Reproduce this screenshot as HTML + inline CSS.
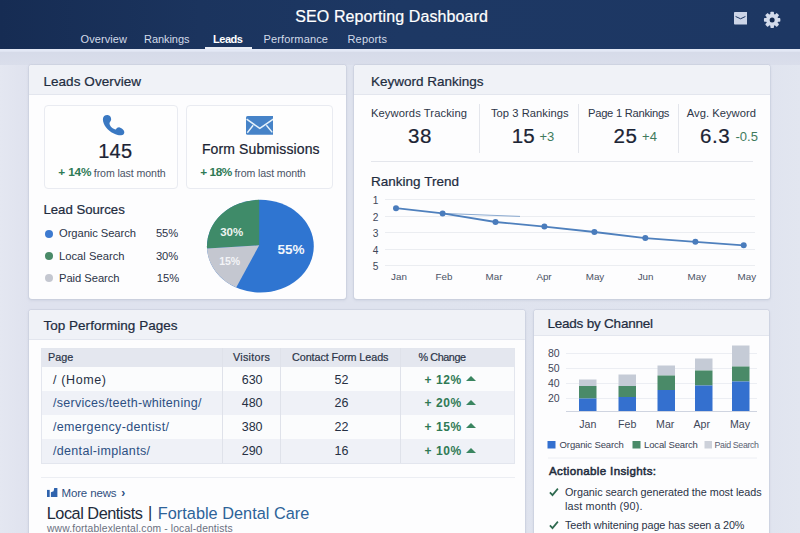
<!DOCTYPE html>
<html lang="en">
<head>
<meta charset="utf-8">
<title>SEO Reporting Dashboard</title>
<style>
*{box-sizing:border-box;margin:0;padding:0}
html,body{width:800px;height:533px;overflow:hidden}
body{font-family:"Liberation Sans",sans-serif;color:#1f2a3d;position:relative;
 background:linear-gradient(90deg,#e4e7f1 0px,#dfe2ee 30px,#dfe3ee 400px,#e0e4ef 770px,#e2e6f0 800px)}
.abs{position:absolute}
.t{position:absolute;white-space:nowrap;line-height:1;transform:translateY(-50%)}
.m{-webkit-text-stroke:0.22px currentColor}
#hdr{left:0;top:0;width:800px;height:48.8px;background:linear-gradient(90deg,#162c53 0,#1b345e 200px,#1d3864 400px,#1d3763 800px)}
#hdrglow{left:0;top:48.8px;width:800px;height:16.2px;background:linear-gradient(180deg,#e3e8f5 0,#e3e8f5 2px,#d6dbe9 3.5px,#dadeeb 16.2px)}
.card{position:absolute;background:#fdfdfe;border-radius:3px;box-shadow:0 0 0 1px rgba(200,205,220,.55),0 1px 3px rgba(120,130,160,.25);overflow:hidden}
.card .hd{position:absolute;left:0;top:0;right:0;height:30px;background:#f0f2f7;border-bottom:1px solid #e3e6ee}
.box{position:absolute;border:1px solid #e9ebf1;border-radius:4px;background:#fefefe}
.g{color:#2f7a55;font-weight:bold}
.dot{position:absolute;width:8.5px;height:8.5px;border-radius:50%}
.vl{position:absolute;width:1px;background:#e4e6ec}
.row{position:absolute;left:41px;width:474px;height:24px}
.tri{position:absolute;width:0;height:0;border-left:5.4px solid transparent;border-right:5.4px solid transparent;border-bottom:5.8px solid #3a8560}
</style>
</head>
<body>
<div id="hdr" class="abs"></div>
<div id="hdrglow" class="abs"></div>
<div class="abs" style="left:205px;top:47px;width:47px;height:2px;background:#e9edf5"></div>
<svg class="abs" style="left:733.8px;top:12.2px" width="13.4" height="12.6" viewBox="0 0 13.4 12.6"><rect width="13.4" height="12.6" rx="0.8" fill="#ccd5e8"/><path d="M1.6 4.5 L6.6 6.8 L11.4 4.5" stroke="#1c3560" stroke-width="1" fill="none"/></svg>
<svg class="abs" style="left:763px;top:11px" width="18" height="18" viewBox="-9 -9 18 18"><g fill="#d3dbeb" transform="translate(0.15,-0.1)"><circle r="6.1"/><rect x="-1.8" y="-8.2" width="3.6" height="16.4" rx="0.8"/><rect x="-1.8" y="-8.2" width="3.6" height="16.4" rx="0.8" transform="rotate(45)"/><rect x="-1.8" y="-8.2" width="3.6" height="16.4" rx="0.8" transform="rotate(90)"/><rect x="-1.8" y="-8.2" width="3.6" height="16.4" rx="0.8" transform="rotate(135)"/><circle r="2.5" fill="#142a50"/></g></svg>

<!-- Leads Overview card -->
<div class="card" style="left:29px;top:65px;width:316.5px;height:234px"><div class="hd"></div></div>
<div class="box" style="left:44px;top:105px;width:134px;height:84px"></div>
<div class="box" style="left:186px;top:105px;width:147px;height:84px"></div>
<svg class="abs" style="left:90px;top:105px" width="60" height="40" viewBox="0 0 800 533"><path fill="#3a78c2" d="M172 190 C172 150 200 130 235 132 C265 134 285 160 282 195 C280 215 256 228 260 250 C268 288 305 320 345 326 C360 300 385 290 410 305 C450 325 470 360 450 385 C435 405 400 408 370 400 C290 380 215 320 185 250 C176 230 172 210 172 190 Z"/></svg>
<svg class="abs" style="left:245.5px;top:116.1px" width="27.9" height="18.8" viewBox="0 0 27.9 18.8"><rect width="27.9" height="18.8" rx="1.6" fill="#4683c8"/><path d="M0.6 3.1 L13.8 12.4 L27.3 3.1" stroke="#e6f2fb" stroke-width="1.5" fill="none" stroke-linejoin="round"/><path d="M1.3 16.7 L7.2 9.3 M26.3 16.4 L20.4 9.3" stroke="#e6f2fb" stroke-width="1.4" fill="none"/></svg>
<div class="dot" style="left:44.7px;top:229.7px;background:#3d7ad0"></div>
<div class="dot" style="left:44.7px;top:251.9px;background:#4a8a68"></div>
<div class="dot" style="left:44.7px;top:273.7px;background:#c4c7d0"></div>
<svg class="abs" style="left:200px;top:195px" width="120" height="102" viewBox="200 195 120 102" font-family="Liberation Sans, sans-serif" font-weight="bold" text-anchor="middle">
 <ellipse cx="260.4" cy="246.2" rx="53.4" ry="46.4" fill="#2f75d1"/>
 <path d="M259.2 245.3 L259.2 199.8 A53.4 46.4 0 0 0 207 248.6 Z" fill="#3f8b69"/>
 <path d="M259.2 245.3 L207 248.6 A53.4 46.4 0 0 0 236.2 287.5 Z" fill="#c4c7d0"/>
 <text x="231.7" y="235.7" font-size="11.5" fill="#eef4f0">30%</text>
 <text x="229.7" y="265.2" font-size="10.5" fill="#f3f4f7">15%</text>
 <text x="291" y="254.3" font-size="13.5" fill="#f2f6fc">55%</text>
</svg>

<!-- Keyword Rankings card -->
<div class="card" style="left:354px;top:65px;width:415.5px;height:234px"><div class="hd"></div></div>
<div class="vl" style="left:479px;top:104px;height:49px"></div>
<div class="vl" style="left:578px;top:104px;height:49px"></div>
<div class="vl" style="left:678px;top:104px;height:49px"></div>
<div class="abs" style="left:371px;top:161px;width:382px;height:1px;background:#e4e6ec"></div>
<svg class="abs" style="left:354px;top:190px" width="416" height="100" viewBox="354 190 416 100" font-family="Liberation Sans, sans-serif">
 <g stroke="#ebedf1" stroke-width="1"><path d="M385 199.5H755M385 216.5H755M385 232.5H755M385 249.5H755M385 265.5H755"/></g>
 <g font-size="10.2" fill="#3f4759" text-anchor="middle"><text x="375.5" y="204">1</text><text x="375.5" y="220.5">2</text><text x="375.5" y="237">3</text><text x="375.5" y="253.5">4</text><text x="375.5" y="270">5</text></g>
 <path d="M442.6 213.4 L520 216.4" stroke="#6d94c4" stroke-width="0.8" fill="none"/>
 <path d="M396 208.2 L442.6 213.4 L495.5 222 L544.4 226.6 L594.4 232 L645.3 238.1 L695.4 241.8 L743.7 245.3" stroke="#4f80bd" stroke-width="1.8" fill="none" stroke-linejoin="round"/>
 <g fill="#4a7cbc"><circle cx="396" cy="208.2" r="3"/><circle cx="442.6" cy="213.4" r="3"/><circle cx="495.5" cy="222" r="3"/><circle cx="544.4" cy="226.6" r="3"/><circle cx="594.4" cy="232" r="3"/><circle cx="645.3" cy="238.1" r="3"/><circle cx="695.4" cy="241.8" r="3"/><circle cx="743.7" cy="245.3" r="3"/></g>
 <g font-size="9.8" fill="#4b5365" text-anchor="middle"><text x="399" y="280.2">Jan</text><text x="444" y="280.2">Feb</text><text x="494" y="280.2">Mar</text><text x="544" y="280.2">Apr</text><text x="595" y="280.2">May</text><text x="645.6" y="280.2">Jun</text><text x="696.8" y="280.2">May</text><text x="746.8" y="280.2">May</text></g>
</svg>

<!-- Top Performing Pages card -->
<div class="card" style="left:29px;top:309.5px;width:495.7px;height:240px"><div class="hd"></div></div>
<div class="abs" style="left:41px;top:477px;width:474px;height:1px;background:#eceef3"></div>
<div class="row" style="top:347.5px;height:19.5px;background:#e4e7ef"></div>
<div class="row" style="top:367px;background:#fbfcfd"></div>
<div class="row" style="top:391px;background:#eff1f7"></div>
<div class="row" style="top:415px;background:#fbfcfd"></div>
<div class="row" style="top:439px;background:#eff1f7"></div>
<div class="abs" style="left:41px;top:347.5px;width:474px;height:116.5px;border:1px solid #e3e6ee"></div>
<div class="vl" style="left:222px;top:347.5px;height:115.5px;background:#dfe2ea"></div>
<div class="vl" style="left:280px;top:347.5px;height:115.5px;background:#dfe2ea"></div>
<div class="vl" style="left:400px;top:347.5px;height:115.5px;background:#dfe2ea"></div>
<div class="tri" style="left:465.6px;top:376px"></div>
<div class="tri" style="left:465.6px;top:399.6px"></div>
<div class="tri" style="left:465.6px;top:423.4px"></div>
<div class="tri" style="left:465.6px;top:447.6px"></div>
<svg class="abs" style="left:47.3px;top:488px" width="10.4" height="9" viewBox="0 0 10.4 9"><g fill="#2f63ad"><rect x="0" y="1.9" width="2.7" height="7.1"/><path d="M3.9 9 V4.2 L6.6 3.3 L7.2 0 H10.4 V9 Z"/></g></svg>

<!-- Leads by Channel card -->
<div class="card" style="left:533.5px;top:309.5px;width:235.3px;height:240px"><div class="hd" style="height:26.5px"></div></div>
<svg class="abs" style="left:534px;top:340px" width="236" height="120" viewBox="534 340 236 120">
 <g stroke="#eceef3" stroke-width="1"><path d="M566 353.5H757M566 368.5H757M566 383.5H757M566 398.5H757"/></g>
 <path d="M566 411.5H757" stroke="#cfd4e0" stroke-width="1"/>
 <path d="M548 458H757" stroke="#eceef3" stroke-width="1"/>
 <g>
  <rect x="579" y="379.5" width="17.5" height="6.5" fill="#c5cbd6"/><rect x="579" y="386" width="17.5" height="12.5" fill="#4a8a68"/><rect x="579" y="398.5" width="17.5" height="12.5" fill="#3470cf"/>
  <rect x="618.5" y="374.5" width="17.5" height="11.5" fill="#c5cbd6"/><rect x="618.5" y="386" width="17.5" height="11" fill="#4a8a68"/><rect x="618.5" y="397" width="17.5" height="14" fill="#3470cf"/>
  <rect x="657.5" y="365.5" width="17.5" height="10" fill="#c5cbd6"/><rect x="657.5" y="375.5" width="17.5" height="14.5" fill="#4a8a68"/><rect x="657.5" y="390" width="17.5" height="21" fill="#3470cf"/>
  <rect x="695" y="358.5" width="17.5" height="12" fill="#c5cbd6"/><rect x="695" y="370.5" width="17.5" height="15" fill="#4a8a68"/><rect x="695" y="385.5" width="17.5" height="25.5" fill="#3470cf"/>
  <rect x="732" y="345.5" width="17.5" height="21" fill="#c5cbd6"/><rect x="732" y="366.5" width="17.5" height="15" fill="#4a8a68"/><rect x="732" y="381.5" width="17.5" height="29.5" fill="#3470cf"/>
 </g>
 <rect x="547.5" y="441" width="8" height="7.5" fill="#3470cf"/>
 <rect x="632.5" y="441" width="8" height="7.5" fill="#4a8a68"/>
 <rect x="704.5" y="441" width="7.5" height="7.5" fill="#cdd1da"/>
</svg>
<svg class="abs" style="left:549px;top:487px" width="11" height="10" viewBox="0 0 11 10"><path d="M0.9 5.3 L3.5 8.1 L8.9 1.6" stroke="#2f6a50" stroke-width="1.7" fill="none"/></svg>
<svg class="abs" style="left:549px;top:519.5px" width="11" height="10" viewBox="0 0 11 10"><path d="M0.9 5.3 L3.5 8.1 L8.9 1.6" stroke="#2f6a50" stroke-width="1.7" fill="none"/></svg>

<div id="title" class="t m" style="left:295.3px;top:17px;font-size:16px;letter-spacing:0.10px;color:#fff;">SEO Reporting Dashboard</div>
<div id="n1" class="t" style="left:80.5px;top:39.3px;font-size:11px;letter-spacing:0.09px;color:#d3dbe9;">Overview</div>
<div id="n2" class="t" style="left:144.0px;top:39.3px;font-size:11px;letter-spacing:-0.05px;color:#d3dbe9;">Rankings</div>
<div id="n3" class="t" style="left:213.0px;top:39.3px;font-size:11px;letter-spacing:-0.45px;color:#fff;font-weight:bold;">Leads</div>
<div id="n4" class="t" style="left:263.5px;top:39.3px;font-size:11px;letter-spacing:0.15px;color:#d3dbe9;">Performance</div>
<div id="n5" class="t" style="left:347.5px;top:39.3px;font-size:11px;letter-spacing:0.16px;color:#d3dbe9;">Reports</div>
<div id="h1" class="t m" style="left:43.4px;top:81.6px;font-size:13.5px;letter-spacing:0.07px;color:#222c3f;">Leads Overview</div>
<div id="v145" class="t m" style="left:98.3px;top:150.8px;font-size:20px;letter-spacing:0.20px;color:#1c2434;">145</div>
<div id="s1a" class="t" style="left:58.2px;top:173.3px;font-size:11.8px;letter-spacing:-0.10px;color:#2f7a55;font-weight:bold;">+ 14%</div>
<div id="s1" class="t" style="left:93.8px;top:173.3px;font-size:10.6px;letter-spacing:-0.08px;color:#4a5366;">from last month</div>
<div id="fs" class="t m" style="left:201.9px;top:149.3px;font-size:14px;letter-spacing:0.12px;color:#1c2434;">Form Submissions</div>
<div id="s2a" class="t" style="left:200.3px;top:173.3px;font-size:11.8px;letter-spacing:-0.45px;color:#2f7a55;font-weight:bold;">+ 18%</div>
<div id="s2" class="t" style="left:234.5px;top:173.3px;font-size:10.6px;letter-spacing:-0.13px;color:#4a5366;">from last month</div>
<div id="h1b" class="t m" style="left:43.4px;top:209.6px;font-size:13.2px;color:#222c3f;">Lead Sources</div>
<div id="l1" class="t" style="left:59.0px;top:234.3px;font-size:11.2px;letter-spacing:-0.06px;color:#2b3447;">Organic Search</div>
<div id="l2" class="t" style="left:59.0px;top:256.5px;font-size:11.2px;letter-spacing:0.02px;color:#2b3447;">Local Search</div>
<div id="l3" class="t" style="left:59.0px;top:278.8px;font-size:11.2px;letter-spacing:-0.04px;color:#2b3447;">Paid Search</div>
<div id="p1" class="t" style="left:155.9px;top:234.3px;font-size:11.2px;color:#2b3447;">55%</div>
<div id="p2" class="t" style="left:155.9px;top:256.5px;font-size:11.2px;color:#2b3447;">30%</div>
<div id="p3" class="t" style="left:156.7px;top:278.8px;font-size:11.2px;color:#2b3447;">15%</div>
<div id="h2" class="t m" style="left:370.9px;top:81.6px;font-size:13.5px;color:#222c3f;">Keyword Rankings</div>
<div id="k1" class="t" style="left:371.0px;top:113.8px;font-size:11.2px;letter-spacing:0.09px;color:#2d3648;">Keywords Tracking</div>
<div id="k1v" class="t m" style="left:408.0px;top:136.3px;font-size:20.5px;letter-spacing:0.60px;color:#1c2434;">38</div>
<div id="k2" class="t" style="left:491.0px;top:113.8px;font-size:11.2px;letter-spacing:0.03px;color:#2d3648;">Top 3 Rankings</div>
<div id="k2v" class="t m" style="left:511.7px;top:136.3px;font-size:20.5px;letter-spacing:0.20px;color:#1c2434;">15</div>
<div id="k2d" class="t" style="left:539.4px;top:135.6px;font-size:13px;color:#3f7a5c;">+3</div>
<div id="k3" class="t" style="left:588.0px;top:113.8px;font-size:11.2px;letter-spacing:-0.27px;color:#2d3648;">Page 1 Rankings</div>
<div id="k3v" class="t m" style="left:613.4px;top:136.3px;font-size:20.5px;letter-spacing:0.60px;color:#1c2434;">25</div>
<div id="k3d" class="t" style="left:642.1px;top:135.6px;font-size:13px;color:#3f7a5c;">+4</div>
<div id="k4" class="t" style="left:686.8px;top:113.8px;font-size:11.2px;letter-spacing:0.03px;color:#2d3648;">Avg. Keyword</div>
<div id="k4v" class="t m" style="left:700.0px;top:136.3px;font-size:20.5px;letter-spacing:0.60px;color:#1c2434;">6.3</div>
<div id="k4d" class="t" style="left:735.5px;top:135.6px;font-size:13px;color:#3f7a5c;">-0.5</div>
<div id="h2b" class="t m" style="left:370.9px;top:181.6px;font-size:13.5px;letter-spacing:0.03px;color:#222c3f;">Ranking Trend</div>
<div id="h3" class="t m" style="left:43.4px;top:325.6px;font-size:13.5px;letter-spacing:0.03px;color:#222c3f;">Top Performing Pages</div>
<div id="th1" class="t" style="left:48.0px;top:357px;font-size:10.8px;color:#2b3447;-webkit-text-stroke:0.2px #2b3447;">Page</div>
<div id="th2" class="t" style="left:233.0px;top:357px;font-size:10.8px;letter-spacing:0.25px;color:#2b3447;-webkit-text-stroke:0.2px #2b3447;">Visitors</div>
<div id="th3" class="t" style="left:292.0px;top:357px;font-size:10.8px;letter-spacing:-0.08px;color:#2b3447;-webkit-text-stroke:0.2px #2b3447;">Contact Form Leads</div>
<div id="th4" class="t" style="left:418.5px;top:357px;font-size:10.8px;letter-spacing:-0.42px;color:#2b3447;-webkit-text-stroke:0.2px #2b3447;">% Change</div>
<div id="r0a" class="t" style="left:53.1px;top:379.9px;font-size:12.5px;letter-spacing:0.60px;color:#263043;">/ (Home)</div>
<div id="r0b" class="t" style="left:241.7px;top:379.9px;font-size:12.5px;color:#263043;">630</div>
<div id="r0c" class="t" style="left:334.5px;top:379.9px;font-size:12.5px;color:#263043;">52</div>
<div id="r0d" class="t" style="left:424.5px;top:379.9px;font-size:12px;letter-spacing:0.56px;color:#2f7a55;font-weight:bold;">+ 12%</div>
<div id="r1a" class="t" style="left:52.9px;top:403.1px;font-size:12.5px;letter-spacing:0.30px;color:#2c4f82;">/services/teeth-whitening/</div>
<div id="r1b" class="t" style="left:241.7px;top:403.1px;font-size:12.5px;color:#263043;">480</div>
<div id="r1c" class="t" style="left:334.5px;top:403.1px;font-size:12.5px;color:#263043;">26</div>
<div id="r1d" class="t" style="left:424.5px;top:403.1px;font-size:12px;letter-spacing:0.56px;color:#2f7a55;font-weight:bold;">+ 20%</div>
<div id="r2a" class="t" style="left:52.9px;top:427.1px;font-size:12.5px;letter-spacing:0.35px;color:#2c4f82;">/emergency-dentist/</div>
<div id="r2b" class="t" style="left:241.7px;top:427.1px;font-size:12.5px;color:#263043;">380</div>
<div id="r2c" class="t" style="left:334.5px;top:427.1px;font-size:12.5px;color:#263043;">22</div>
<div id="r2d" class="t" style="left:424.5px;top:427.1px;font-size:12px;letter-spacing:0.56px;color:#2f7a55;font-weight:bold;">+ 15%</div>
<div id="r3a" class="t" style="left:52.9px;top:451.1px;font-size:12.5px;letter-spacing:0.34px;color:#2c4f82;">/dental-implants/</div>
<div id="r3b" class="t" style="left:241.7px;top:451.1px;font-size:12.5px;color:#263043;">290</div>
<div id="r3c" class="t" style="left:334.5px;top:451.1px;font-size:12.5px;color:#263043;">16</div>
<div id="r3d" class="t" style="left:424.5px;top:451.1px;font-size:12px;letter-spacing:0.56px;color:#2f7a55;font-weight:bold;">+ 10%</div>
<div id="mn" class="t" style="left:61.5px;top:493.8px;font-size:11.5px;letter-spacing:-0.15px;color:#2f4f7f;">More news</div>
<div id="mna" class="t" style="left:121.2px;top:492.5px;font-size:12px;color:#2f4f7f;font-weight:bold;">›</div>
<div id="ld1" class="t" style="left:46.8px;top:512.7px;font-size:16.3px;letter-spacing:-0.48px;color:#222b3c;">Local Dentists</div>
<div id="ld2" class="t" style="left:148.1px;top:512.2px;font-size:16.3px;color:#222b3c;">|</div>
<div id="ld3" class="t" style="left:157.8px;top:512.7px;font-size:16.3px;letter-spacing:0.02px;color:#2d6399;">Fortable Dental Care</div>
<div id="url" class="t" style="left:47.0px;top:529px;font-size:10.3px;letter-spacing:0.14px;color:#6a7080;">www.fortablexlental.com - local-dentists</div>
<div id="h4" class="t m" style="left:547.4px;top:324px;font-size:13.5px;letter-spacing:-0.21px;color:#222c3f;">Leads by Channel</div>
<div id="ya0" class="t" style="left:547.9px;top:353px;font-size:10.5px;color:#3f4759;">80</div>
<div id="ya1" class="t" style="left:547.9px;top:368px;font-size:10.5px;color:#3f4759;">50</div>
<div id="ya2" class="t" style="left:547.9px;top:383px;font-size:10.5px;color:#3f4759;">40</div>
<div id="ya3" class="t" style="left:547.9px;top:398px;font-size:10.5px;color:#3f4759;">20</div>
<div id="xa0" class="t" style="left:579.2px;top:423.9px;font-size:10.6px;color:#3f4759;">Jan</div>
<div id="xa1" class="t" style="left:618.1px;top:423.9px;font-size:10.6px;color:#3f4759;">Feb</div>
<div id="xa2" class="t" style="left:656.1px;top:423.9px;font-size:10.6px;color:#3f4759;">Mar</div>
<div id="xa3" class="t" style="left:693.5px;top:423.9px;font-size:10.6px;color:#3f4759;">Apr</div>
<div id="xa4" class="t" style="left:730.0px;top:423.9px;font-size:10.6px;color:#3f4759;">May</div>
<div id="le1" class="t" style="left:559.6px;top:445px;font-size:9.5px;letter-spacing:-0.13px;color:#3a4254;">Organic Search</div>
<div id="le2" class="t" style="left:644.1px;top:445px;font-size:9.5px;letter-spacing:-0.15px;color:#3a4254;">Local Search</div>
<div id="le3" class="t" style="left:714.6px;top:445px;font-size:8.8px;letter-spacing:-0.36px;color:#5a6172;">Paid Search</div>
<div id="ai" class="t" style="left:549.0px;top:471px;font-size:11.6px;letter-spacing:0.34px;color:#222b3c;-webkit-text-stroke:0.5px #222b3c;">Actionable Insights:</div>
<div id="i1" class="t" style="left:565.0px;top:492.2px;font-size:10.8px;letter-spacing:-0.04px;color:#2b3447;">Organic search generated the most leads</div>
<div id="i2" class="t" style="left:565.0px;top:505.7px;font-size:10.8px;letter-spacing:0.16px;color:#2b3447;">last month (90).</div>
<div id="i3" class="t" style="left:565.0px;top:524.5px;font-size:10.8px;letter-spacing:-0.09px;color:#2b3447;">Teeth whitening page has seen a 20%</div>
</body>
</html>
